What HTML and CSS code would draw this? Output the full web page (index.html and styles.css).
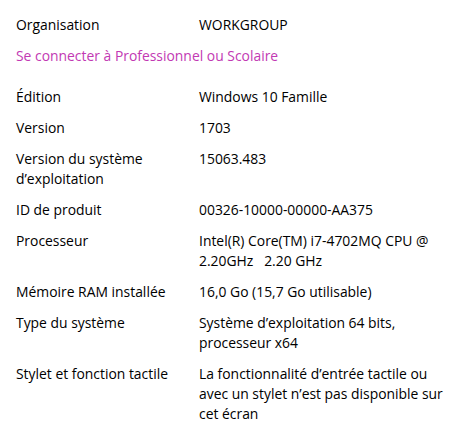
FILE: index.html
```html
<!DOCTYPE html>
<html lang="fr">
<head>
    <meta charset="UTF-8">
    <meta name="viewport" content="width=device-width, initial-scale=1.0">
    <title>Informations système</title>
    <link rel="stylesheet" href="styles.css">
</head>
<body>
    <div id="about">
        <div class="row">
            <span class="label">Organisation</span>
            <span class="value">WORKGROUP</span>
        </div>
        <a class="link" href="#">Se connecter à Professionnel ou Scolaire</a>

        <div class="row">
            <span class="label">Édition</span>
            <span class="value">Windows 10 Famille</span>
        </div>
        <div class="row">
            <span class="label">Version</span>
            <span class="value">1703</span>
        </div>
        <div class="row">
            <span class="label">Version du système<br>d’exploitation</span>
            <span class="value">15063.483</span>
        </div>
        <div class="row">
            <span class="label">ID de produit</span>
            <span class="value">00326-10000-00000-AA375</span>
        </div>
        <div class="row">
            <span class="label">Processeur</span>
            <span class="value">Intel(R) Core(TM) i7-4702MQ CPU @<br>2.20GHz&nbsp;&nbsp; 2.20 GHz</span>
        </div>
        <div class="row">
            <span class="label">Mémoire RAM installée</span>
            <span class="value">16,0 Go (15,7 Go utilisable)</span>
        </div>
        <div class="row">
            <span class="label">Type du système</span>
            <span class="value">Système d’exploitation 64 bits,<br>processeur x64</span>
        </div>
        <div class="row">
            <span class="label">Stylet et fonction tactile</span>
            <span class="value">La fonctionnalité d’entrée tactile ou<br>avec un stylet n’est pas disponible sur<br>cet écran</span>
        </div>
    </div>
</body>
</html>
```

FILE: styles.css
```css
body {
    font-family: "Open Sans", "Noto Sans", sans-serif;
    font-size: 13.9px;
    line-height: 20px;
    color: #000;
    background-color: #fff;
    margin: 0;
    padding: 0;
}

#about {
    padding: 15px 2px 15px 16px;
}

.row {
    display: grid;
    grid-template-columns: 183px 1fr;
    margin-bottom: 11px;
}

.value {
    white-space: nowrap;
}

.link {
    display: block;
    color: #c239b3;
    text-decoration: none;
    margin-bottom: 21px;
}
```
